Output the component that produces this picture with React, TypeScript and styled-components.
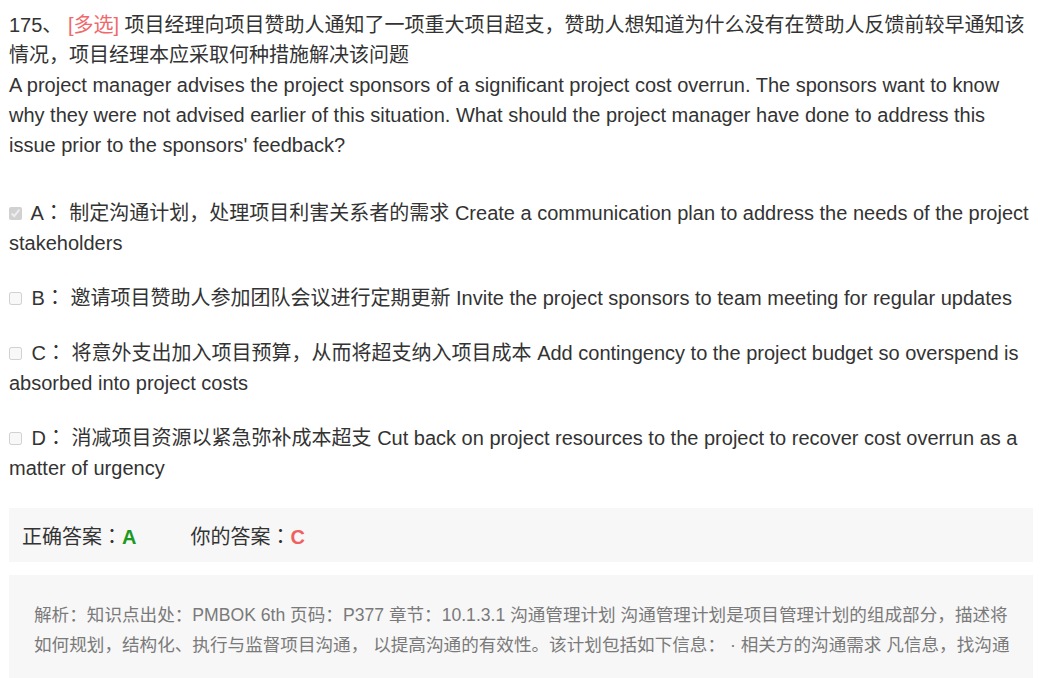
import React from 'react';
import styled, { createGlobalStyle } from 'styled-components';

const GlobalStyle = createGlobalStyle`
  html, body {
    margin: 0;
    padding: 0;
    background: #fff;
  }
  body {
    font-family: "Liberation Sans", Arial, "Noto Sans CJK SC", sans-serif;
    color: #333;
  }
`;

const Page = styled.div`
  padding: 10px 10px 0 9px;
  overflow: hidden;
  height: 678px;
  box-sizing: border-box;
`;

const Question = styled.div`
  font-size: 20px;
  line-height: 30px;
  color: #333;
`;

const Tag = styled.span`
  color: #f0686a;
`;

// full-width colon drawn centred, as in the reference
const Colon = styled.span`
  font-family: "Noto Sans CJK TC", sans-serif;
  line-height: 0;
`;

const Options = styled.div`
  margin-top: 38px;
  display: flex;
  flex-direction: column;
  gap: 25px;
`;

const Option = styled.label`
  display: block;
  font-size: 20px;
  line-height: 30px;
  color: #333;
  input {
    margin: 0 4px 0 0;
    width: 13px;
    height: 13px;
    vertical-align: 0px;
  }
`;

const AnswerBar = styled.div`
  margin-top: 25px;
  background: #f7f7f7;
  height: 54px;
  padding-left: 13px;
  display: flex;
  align-items: center;
  font-size: 20px;
  color: #333;
`;

const AnswerItem = styled.span`
  margin-right: 54px;
`;

const Letter = styled.b<{ $ok: boolean }>`
  color: ${p => (p.$ok ? '#1d9a1d' : '#f0605e')};
`;

const Explain = styled.div`
  margin-top: 13px;
  background: #f7f7f7;
  padding: 25px 20px 25px 25px;
  font-size: 17.6px;
  line-height: 30px;
  color: #7a7a7a;
`;

const ExplainPara = styled.p`
  margin: 0 0 20px;
`;

const options = [
  { key: 'A', checked: true, text: '制定沟通计划，处理项目利害关系者的需求 Create a communication plan to address the needs of the project stakeholders' },
  { key: 'B', checked: false, text: '邀请项目赞助人参加团队会议进行定期更新 Invite the project sponsors to team meeting for regular updates' },
  { key: 'C', checked: false, text: '将意外支出加入项目预算，从而将超支纳入项目成本 Add contingency to the project budget so overspend is absorbed into project costs' },
  { key: 'D', checked: false, text: '消减项目资源以紧急弥补成本超支 Cut back on project resources to the project to recover cost overrun as a matter of urgency' },
];

export default function App() {
  return (
    <Page>
      <GlobalStyle />
      <Question>
        175、 <Tag>[多选]</Tag> 项目经理向项目赞助人通知了一项重大项目超支，赞助人想知道为什么没有在赞助人反馈前较早通知该情况，项目经理本应采取何种措施解决该问题
        <br />
        A project manager advises the project sponsors of a significant project cost overrun. The sponsors want to know why they were not advised earlier of this situation. What should the project manager have done to address this issue prior to the sponsors' feedback?
      </Question>
      <Options>
        {options.map(o => (
          <Option key={o.key}>
            <input type="checkbox" disabled checked={o.checked} readOnly /> {o.key}<Colon>：</Colon> {o.text}
          </Option>
        ))}
      </Options>
      <AnswerBar>
        <AnswerItem>正确答案<Colon>：</Colon><Letter $ok>A</Letter></AnswerItem>
        <AnswerItem>你的答案<Colon>：</Colon><Letter $ok={false}>C</Letter></AnswerItem>
      </AnswerBar>
      <Explain>
        <ExplainPara>
          解析：知识点出处：PMBOK 6th 页码：P377 章节：10.1.3.1 沟通管理计划 沟通管理计划是项目管理计划的组成部分，描述将如何规划，结构化、执行与监督项目沟通， 以提高沟通的有效性。该计划包括如下信息： · 相关方的沟通需求 凡信息，找沟通
        </ExplainPara>
        <ExplainPara>
          对象，沟通的时间与频率，沟通方法和渠道，发布信息的负责人员，传递保密信息的权限等。
        </ExplainPara>
      </Explain>
    </Page>
  );
}
